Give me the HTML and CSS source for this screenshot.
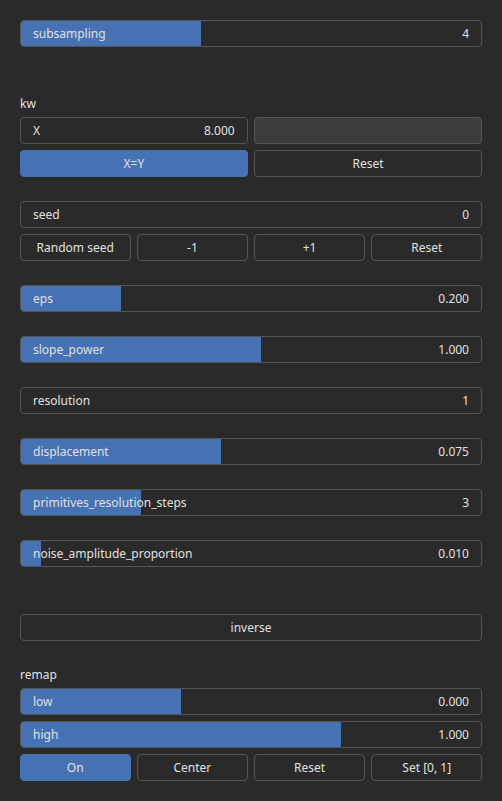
FILE: index.html
```html
<!DOCTYPE html>
<html>
<head>
<meta charset="utf-8">
<link rel="stylesheet" href="styles.css">
</head>
<body>
<div class="panel">
  <div class="group">
    <div class="slider"><div class="fill" style="width:180px"></div><span class="lbl">subsampling</span><span class="val">4</span></div>
  </div>
  <div class="spacer"></div>
  <div class="group">
    <div class="title">kw</div>
    <div class="row cols2">
      <div class="field"><span class="lbl">X</span><span class="val">8.000</span></div>
      <div class="field disabled"></div>
    </div>
    <div class="row cols2">
      <div class="btn on">X=Y</div>
      <div class="btn">Reset</div>
    </div>
  </div>
  <div class="group">
    <div class="field"><span class="lbl">seed</span><span class="val">0</span></div>
    <div class="row cols4">
      <div class="btn">Random seed</div>
      <div class="btn">-1</div>
      <div class="btn">+1</div>
      <div class="btn">Reset</div>
    </div>
  </div>
  <div class="group">
    <div class="slider"><div class="fill" style="width:100px"></div><span class="lbl">eps</span><span class="val">0.200</span></div>
  </div>
  <div class="group">
    <div class="slider"><div class="fill" style="width:240px"></div><span class="lbl">slope_power</span><span class="val">1.000</span></div>
  </div>
  <div class="group">
    <div class="field"><span class="lbl">resolution</span><span class="val">1</span></div>
  </div>
  <div class="group">
    <div class="slider"><div class="fill" style="width:200px"></div><span class="lbl">displacement</span><span class="val">0.075</span></div>
  </div>
  <div class="group">
    <div class="slider"><div class="fill" style="width:120px"></div><span class="lbl">primitives_resolution_steps</span><span class="val">3</span></div>
  </div>
  <div class="group">
    <div class="slider"><div class="fill" style="width:20px"></div><span class="lbl">noise_amplitude_proportion</span><span class="val">0.010</span></div>
  </div>
  <div class="spacer"></div>
  <div class="group">
    <div class="btn">inverse</div>
  </div>
  <div class="group">
    <div class="title">remap</div>
    <div class="slider"><div class="fill" style="width:160px"></div><span class="lbl">low</span><span class="val">0.000</span></div>
    <div class="slider"><div class="fill" style="width:320px"></div><span class="lbl">high</span><span class="val">1.000</span></div>
    <div class="row cols4">
      <div class="btn on">On</div>
      <div class="btn">Center</div>
      <div class="btn">Reset</div>
      <div class="btn">Set [0, 1]</div>
    </div>
  </div>
</div>
</body>
</html>
```
FILE: styles.css
```css
html, body {
  margin: 0;
  padding: 0;
  background: #2a2a2a;
  height: 100%;
}
body {
  font-family: "Noto Sans", "Open Sans", sans-serif;
  font-size: 12px;
  color: #e0e0e0;
}
.panel {
  padding: 20px 20px;
  display: flex;
  flex-direction: column;
  gap: 24px;
}
.spacer {
  height: 0;
  margin-top: -1px;
}
.group {
  display: flex;
  flex-direction: column;
  gap: 6px;
}
.title {
  height: 17px;
  line-height: 17px;
  padding-top: 1px;
  box-sizing: border-box;
}
.row {
  display: grid;
  gap: 6.67px;
}
.cols2 { grid-template-columns: 1fr 1fr; }
.cols4 { grid-template-columns: 1fr 1fr 1fr 1fr; }
.slider, .field, .btn {
  box-sizing: border-box;
  height: 27px;
  border: 1px solid #555555;
  border-radius: 4px;
  background: #2a2a2a;
  position: relative;
  display: flex;
  align-items: center;
  justify-content: space-between;
  padding: 1px 12px 0;
  overflow: hidden;
  line-height: 1;
}
.fill {
  position: absolute;
  left: 0;
  top: 0;
  bottom: 0;
  background: #4672b4;
}
.lbl, .val {
  position: relative;
}
.btn {
  justify-content: center;
}
.btn.on {
  background: #4672b4;
  border-color: #4672b4;
}
.field.disabled {
  background: #3c3c3c;
}
```
